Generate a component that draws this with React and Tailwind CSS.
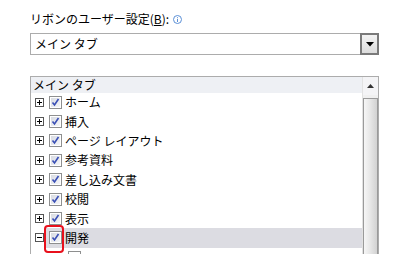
import React from "react";

const items = [
  "ホーム",
  "挿入",
  "ページ レイアウト",
  "参考資料",
  "差し込み文書",
  "校閲",
  "表示",
];

function Expander({ open }) {
  return (
    <svg width="9" height="9" viewBox="0 0 9 9" className="shrink-0">
      <rect x="0.5" y="0.5" width="8" height="8" fill="#fff" stroke="#555" />
      <path d="M2 4.5h5" stroke="#000" />
      {!open && <path d="M4.5 2v5" stroke="#000" />}
    </svg>
  );
}

function Check() {
  return (
    <svg width="13" height="13" viewBox="0 0 13 13" className="shrink-0">
      <defs>
        <linearGradient id="cb" x1="0" y1="0" x2="1" y2="1">
          <stop offset="0" stopColor="#d8dbe2" />
          <stop offset="1" stopColor="#f4f5f8" />
        </linearGradient>
      </defs>
      <rect x="0.5" y="0.5" width="12" height="12" fill="#fff" stroke="#8e8f8f" />
      <rect x="2" y="2" width="9" height="9" fill="url(#cb)" />
      <path d="M3.5 6.5l2 2.5 4-6" fill="none" stroke="#3a4fb5" strokeWidth="1.6" />
    </svg>
  );
}

function Row({ label, open, selected }) {
  return (
    <div className="flex items-center h-[19.4px] pl-[4px]">
      <Expander open={open} />
      <div
        className={
          "flex items-center h-full flex-1 pl-[5px] gap-[3px] " +
          (selected ? "bg-[#dcdce2] relative" : "")
        }
      >
        <Check />
        <span>{label}</span>
        {selected && (
          <div className="absolute left-0 top-[-3px] w-[20px] h-[28px] border-2 border-[#e8101c] rounded-[4px]" />
        )}
      </div>
    </div>
  );
}

export default function App() {
  return (
    <div
      className="w-[400px] h-[254px] overflow-hidden bg-white text-black text-[12px] leading-none pl-[30px] pt-[12px]"
      style={{ fontFamily: '"Noto Sans CJK JP", sans-serif' }}
    >
      <div className="flex items-center h-[14px] gap-[4px]">
        <span>
          リボンのユーザー設定(<span className="underline">B</span>):
        </span>
        <svg width="9" height="9" viewBox="0 0 9 9">
          <circle cx="4.5" cy="4.5" r="4" fill="none" stroke="#5b8fd6" />
          <path d="M4.5 4v3M4.5 2.2v1" stroke="#5b8fd6" />
        </svg>
      </div>

      <div className="mt-[7px] w-[349px] h-[22px] border border-[#acacac] flex items-center justify-between">
        <span className="pl-[4px]">メイン タブ</span>
        <div className="w-[19px] h-[22px] -my-px -mr-px border-2 border-[#7a7a7a] bg-gradient-to-b from-[#f3f3f3] to-[#dcdcdc] flex items-center justify-center">
          <svg width="8" height="6" viewBox="0 0 8 6">
            <path d="M0 1h8L4 5.5z" fill="#000" />
          </svg>
        </div>
      </div>

      <div className="mt-[21px] w-[349px] h-[200px] border border-[#acacac] flex">
        <div className="flex-1 flex flex-col">
          <div className="h-[15.5px] bg-[#eef0f4] flex items-center pl-[2px]">
            メイン タブ
          </div>
          {items.map((t) => (
            <Row key={t} label={t} />
          ))}
          <Row label="開発" open selected />
          <div className="flex items-center h-[19px] pl-[37px]">
            <svg width="13" height="13" viewBox="0 0 13 13">
              <rect x="0.5" y="0.5" width="12" height="12" fill="#fff" stroke="#8e8f8f" />
            </svg>
          </div>
        </div>
        <div className="w-[16px] flex flex-col bg-[#f0f0f0] border-l border-[#e2e2e2]">
          <div className="h-[18px] flex items-center justify-center bg-[#f4f4f6]">
            <svg width="7" height="4" viewBox="0 0 7 4">
              <path d="M0 4h7L3.5 0z" fill="#333" />
            </svg>
          </div>
          <div className="mt-[3px] flex-1 border border-[#9a9a9a] bg-gradient-to-r from-[#f6f6f6] via-[#e6e6e6] to-[#d2d2d2]" />
        </div>
      </div>
    </div>
  );
}
